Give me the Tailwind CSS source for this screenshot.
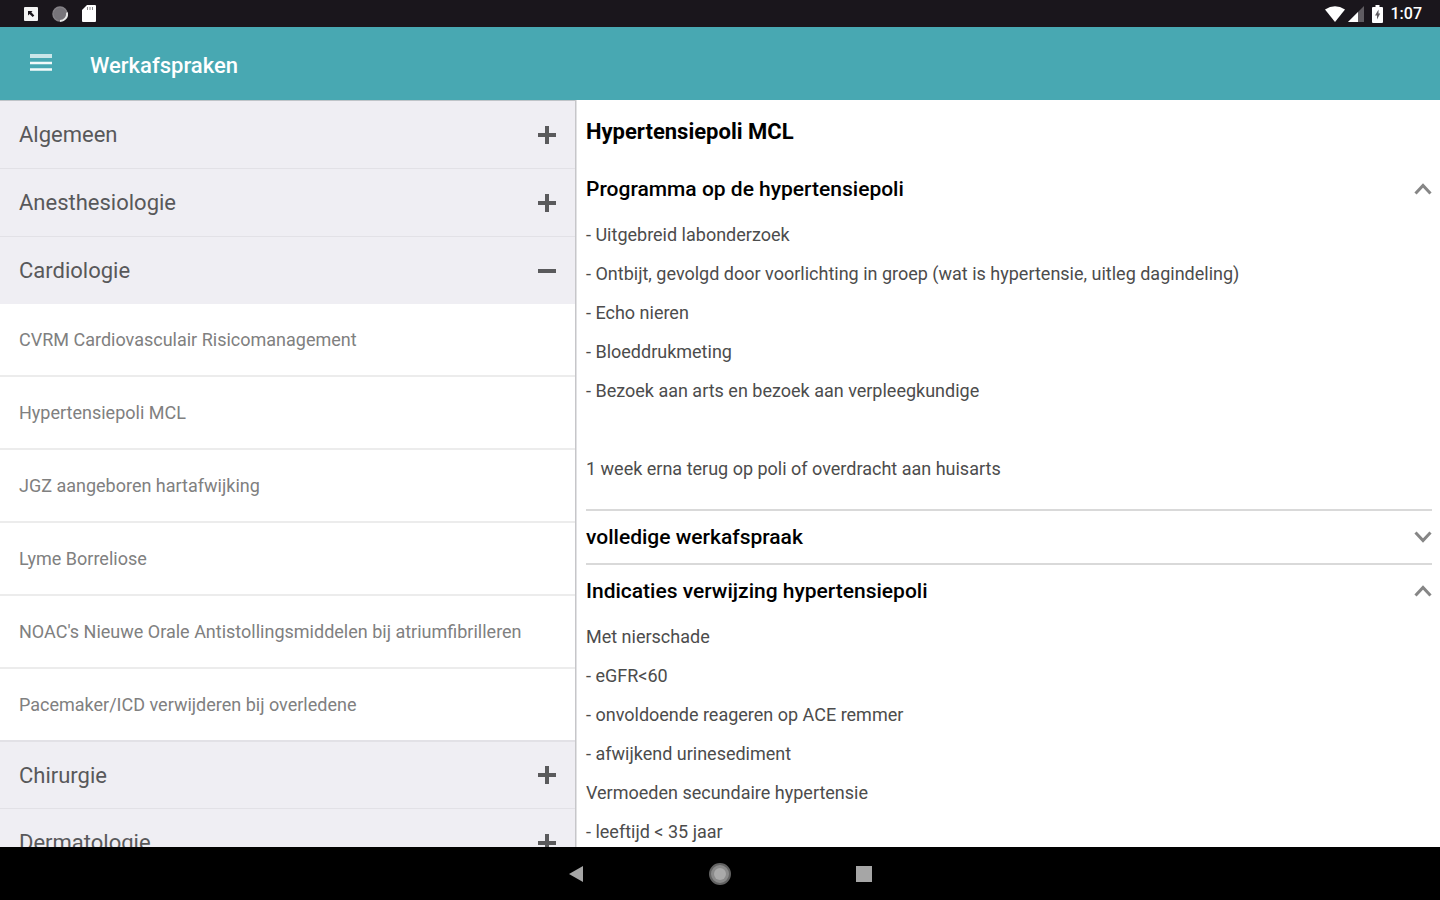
<!DOCTYPE html>
<html lang="nl">
<head>
  <meta charset="UTF-8" />
  <meta name="viewport" content="width=device-width, initial-scale=1.0"/>
  <title>Werkafspraken</title>
  <script src="https://cdn.jsdelivr.net/npm/@tailwindcss/browser@4"></script>
</head>
<body class="h-screen flex flex-col overflow-hidden bg-white font-['Roboto',sans-serif]">

  <!-- Status bar -->
  <div class="h-[27px] shrink-0 bg-[#1a161c] flex items-center justify-between pl-6 pr-[18px] text-white">
    <div class="flex items-center gap-[14px]">
      <svg class="w-[14px] h-[14px]" viewBox="0 0 14 14"><rect width="14" height="14" rx="1" fill="#f4f4f4"/><path d="M4 4h4.500l-1.200 1.300 3 3.200-1.600 1.600-3.200-3L4 8.500z" fill="#1a161c"/></svg>
      <svg class="w-4 h-4" viewBox="0 0 16 16"><circle cx="8" cy="8" r="7" fill="#77747a" stroke="#858287" stroke-width="1.500"/><path d="M15 6.500a7.200 7.200 0 0 1-7 8.500" fill="none" stroke="#e6e6e6" stroke-width="2"/></svg>
      <svg class="w-[14px] h-[17px]" viewBox="0 0 14 17"><path d="M5 0h8a1 1 0 0 1 1 1v15a1 1 0 0 1-1 1H1a1 1 0 0 1-1-1V5z" fill="#fff"/><path d="M5.500 2v3M8 2v3M10.500 2v3" stroke="#8d8b8f" stroke-width="1"/></svg>
    </div>
    <div class="flex items-center">
      <svg class="w-5 h-4" viewBox="0 0 20 16"><path d="M0 3.500Q10-3 20 3.500L10 16z" fill="#fff"/></svg>
      <svg class="w-4 h-4 ml-[3px]" viewBox="0 0 16 16"><path d="M16 0v16H0z" fill="#5f5c61"/><path d="M10 6v10H0z" fill="#fff"/></svg>
      <svg class="w-[11px] h-[18px] ml-2" viewBox="0 0 11 18"><path d="M3.500 0h4v2H10a1 1 0 0 1 1 1v14a1 1 0 0 1-1 1H1a1 1 0 0 1-1-1V3a1 1 0 0 1 1-1h2.500z" fill="#fff"/><path d="M6.500 4.500L3 10.500h2v4l3.200-6H6.500z" fill="#5f5c61"/></svg>
      <span class="ml-2 text-base leading-5 font-medium">1:07</span>
    </div>
  </div>

  <!-- App bar -->
  <header class="h-[73px] shrink-0 bg-[#48a8b2] flex items-center pt-1 text-white">
    <button class="ml-[30px] pb-2" aria-label="Menu">
      <svg class="w-[22px] h-[18px]" viewBox="0 0 22 18"><path d="M0 3h22" stroke="#c9e6e9" stroke-width="4"/><path d="M0 10h22M0 16.500h22" stroke="#f2fafa" stroke-width="2.500"/></svg>
    </button>
    <h1 class="ml-[38px] text-[22px] leading-7 font-medium">Werkafspraken</h1>
  </header>

  <main class="flex-1 min-h-0 flex">

    <!-- Categories -->
    <nav class="w-2/5 overflow-y-auto [scrollbar-width:none] border-r border-[#c6c6c9] text-[#58585a]">
      <button class="w-full h-[68px] flex items-center justify-between pl-[19px] pr-[19px] bg-[#efeef3] border-t border-[#bfc4c8] text-[22px]" aria-expanded="false">
        Algemeen
        <svg class="w-[18px] h-[18px]" viewBox="0 0 18 18"><path d="M0 9h18M9 0v18" stroke="#5a5a5c" stroke-width="4"/></svg>
      </button>
      <button class="w-full h-[68px] flex items-center justify-between pl-[19px] pr-[19px] bg-[#efeef3] border-t border-[#e2e1e6] text-[22px]" aria-expanded="false">
        Anesthesiologie
        <svg class="w-[18px] h-[18px]" viewBox="0 0 18 18"><path d="M0 9h18M9 0v18" stroke="#5a5a5c" stroke-width="4"/></svg>
      </button>
      <button class="w-full h-[68px] flex items-center justify-between pl-[19px] pr-[19px] bg-[#efeef3] border-t border-[#e2e1e6] text-[22px]" aria-expanded="true">
        Cardiologie
        <svg class="w-[18px] h-[18px]" viewBox="0 0 18 18"><path d="M0 9h18" stroke="#5a5a5c" stroke-width="4"/></svg>
      </button>
      <ul class="text-lg text-[#808080] divide-y-2 divide-[#ececec]">
        <li><a href="#" class="h-[71px] flex items-center px-[19px]">CVRM Cardiovasculair Risicomanagement</a></li>
        <li><a href="#" class="h-[71px] flex items-center px-[19px]">Hypertensiepoli MCL</a></li>
        <li><a href="#" class="h-[71px] flex items-center px-[19px]">JGZ aangeboren hartafwijking</a></li>
        <li><a href="#" class="h-[71px] flex items-center px-[19px]">Lyme Borreliose</a></li>
        <li><a href="#" class="h-[71px] flex items-center px-[19px]">NOAC's Nieuwe Orale Antistollingsmiddelen bij atriumfibrilleren</a></li>
        <li><a href="#" class="h-[71px] flex items-center px-[19px]">Pacemaker/ICD verwijderen bij overledene</a></li>
      </ul>
      <button class="w-full h-[68px] flex items-center justify-between pl-[19px] pr-[19px] bg-[#efeef3] border-t-2 border-[#e2e1e6] text-[22px]" aria-expanded="false">
        Chirurgie
        <svg class="w-[18px] h-[18px]" viewBox="0 0 18 18"><path d="M0 9h18M9 0v18" stroke="#5a5a5c" stroke-width="4"/></svg>
      </button>
      <button class="w-full h-[68px] flex items-center justify-between pl-[19px] pr-[19px] bg-[#efeef3] border-t border-[#e2e1e6] text-[22px]" aria-expanded="false">
        Dermatologie
        <svg class="w-[18px] h-[18px]" viewBox="0 0 18 18"><path d="M0 9h18M9 0v18" stroke="#5a5a5c" stroke-width="4"/></svg>
      </button>
    </nav>

    <!-- Selected agreement -->
    <article class="flex-1 overflow-y-auto [scrollbar-width:none] border-l border-[#e2e2e4] pl-[9px] pr-2 text-[#4c4c4c] text-lg leading-[39px]">
      <h2 class="h-[63px] flex items-center text-[22px] font-bold text-black">Hypertensiepoli MCL</h2>

      <section class="pb-[21px] border-b-2 border-[#d9d9d9]">
        <button class="w-full h-[52px] flex items-center justify-between text-[21px] font-medium text-black" aria-expanded="true">
          Programma op de hypertensiepoli
          <svg class="w-[18px] h-3" viewBox="0 0 18 12"><path d="M1.500 10.500L9 2.500l7.500 8" fill="none" stroke="#868686" stroke-width="3"/></svg>
        </button>
        <p>- Uitgebreid labonderzoek</p>
        <p>- Ontbijt, gevolgd door voorlichting in groep (wat is hypertensie, uitleg dagindeling)</p>
        <p>- Echo nieren</p>
        <p>- Bloeddrukmeting</p>
        <p>- Bezoek aan arts en bezoek aan verpleegkundige</p>
        <p>&nbsp;</p>
        <p>1 week erna terug op poli of overdracht aan huisarts</p>
      </section>

      <section class="border-b-2 border-[#d9d9d9]">
        <button class="w-full h-[52px] flex items-center justify-between text-[21px] font-medium text-black" aria-expanded="false">
          volledige werkafspraak
          <svg class="w-[18px] h-3" viewBox="0 0 18 12"><path d="M1.500 1.500L9 9.500l7.500-8" fill="none" stroke="#868686" stroke-width="3"/></svg>
        </button>
      </section>

      <section>
        <button class="w-full h-[52px] flex items-center justify-between text-[21px] font-medium text-black" aria-expanded="true">
          Indicaties verwijzing hypertensiepoli
          <svg class="w-[18px] h-3" viewBox="0 0 18 12"><path d="M1.500 10.500L9 2.500l7.500 8" fill="none" stroke="#868686" stroke-width="3"/></svg>
        </button>
        <p>Met nierschade</p>
        <p>- eGFR&lt;60</p>
        <p>- onvoldoende reageren op ACE remmer</p>
        <p>- afwijkend urinesediment</p>
        <p>Vermoeden secundaire hypertensie</p>
        <p>- leeftijd &lt; 35 jaar</p>
      </section>
    </article>
  </main>

  <!-- Navigation bar -->
  <footer class="h-[53px] shrink-0 bg-black flex items-center justify-center gap-[122px]">
    <button aria-label="Terug" class="w-[22px] flex justify-center"><svg class="w-[14px] h-4" viewBox="0 0 14 16"><path d="M14 0v16L0 8z" fill="#a6a6a6"/></svg></button>
    <button aria-label="Start" class="w-[22px]"><svg class="w-[22px] h-[22px]" viewBox="0 0 22 22"><circle cx="11" cy="11" r="10" fill="#8a8a8a" stroke="#626262" stroke-width="2"/><circle cx="11" cy="11" r="6" fill="#aaa"/></svg></button>
    <button aria-label="Overzicht" class="w-[22px] flex justify-center"><svg class="w-4 h-4" viewBox="0 0 16 16"><rect width="16" height="16" fill="#a6a6a6"/></svg></button>
  </footer>

</body>
</html>
